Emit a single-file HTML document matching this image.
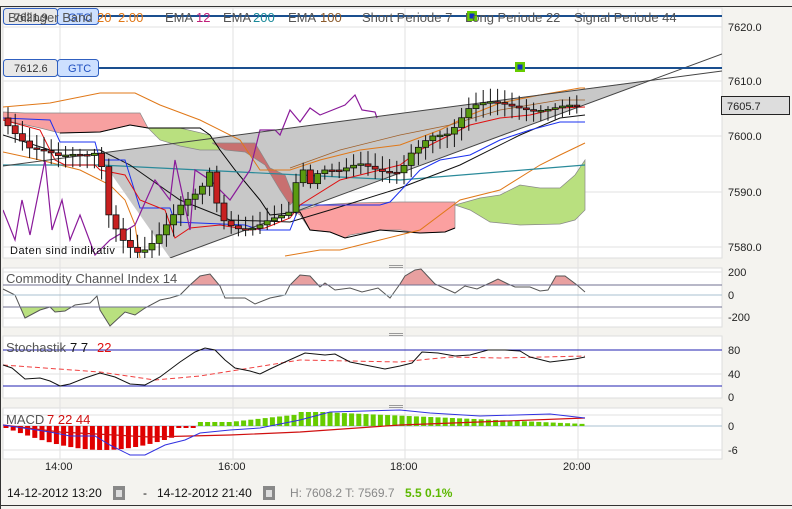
<!DOCTYPE html>
<html><head><meta charset="utf-8"><style>
html,body{margin:0;padding:0;background:#f4f3ef;}
svg{display:block;font-family:"Liberation Sans",sans-serif;}
</style></head><body>
<svg id="s" width="792" height="509" viewBox="0 0 792 509" xmlns="http://www.w3.org/2000/svg">
<rect x="0" y="0" width="792" height="509" fill="#f4f3ef"/>
<line x1="0" y1="6.5" x2="792" y2="6.5" stroke="#333"/>
<line x1="0.5" y1="6" x2="0.5" y2="509" stroke="#333"/>
<rect x="3" y="8" width="719" height="250" fill="#fff" stroke="#ddd"/>
<rect x="3" y="268" width="719" height="59" fill="#fff" stroke="#ddd"/>
<rect x="3" y="336" width="719" height="62" fill="#fff" stroke="#ddd"/>
<rect x="3" y="408" width="719" height="51" fill="#fff" stroke="#ddd"/>
<g stroke="#999" stroke-width="1">
<line x1="389" y1="265.5" x2="403" y2="265.5"/><line x1="389" y1="267.5" x2="403" y2="267.5"/>
<line x1="389" y1="333.5" x2="403" y2="333.5"/><line x1="389" y1="335.5" x2="403" y2="335.5"/>
<line x1="389" y1="405.5" x2="403" y2="405.5"/><line x1="389" y1="407.5" x2="403" y2="407.5"/>
</g>
<g stroke="#e2e2e2">
<line x1="3" y1="27" x2="722" y2="27"/><line x1="3" y1="81" x2="722" y2="81"/><line x1="3" y1="136" x2="722" y2="136"/><line x1="3" y1="192" x2="722" y2="192"/><line x1="3" y1="247" x2="722" y2="247"/>
<line x1="3" y1="272" x2="722" y2="272"/><line x1="3" y1="318" x2="722" y2="318"/>
<line x1="3" y1="374" x2="722" y2="374"/><line x1="3" y1="415" x2="722" y2="415"/><line x1="3" y1="450" x2="722" y2="450"/>
<line x1="60" y1="8" x2="60" y2="459"/><line x1="233" y1="8" x2="233" y2="459"/><line x1="405" y1="8" x2="405" y2="459"/><line x1="578" y1="8" x2="578" y2="459"/>
</g>
<defs><clipPath id="mc"><rect x="3" y="8" width="719" height="250"/></clipPath>
<clipPath id="cb"><rect x="0" y="307" width="792" height="30"/></clipPath>
<clipPath id="ca"><rect x="0" y="260" width="792" height="25"/></clipPath></defs>
<g clip-path="url(#mc)">
<polygon points="97,153.6 650,80 170,258" fill="#c8c8c8"/>
<polygon points="3,112 25,113 140,113 148,128 130,125 100,132 60,133 40,128 3,120" fill="#f7a0a0" stroke="#888" stroke-width="0.7"/>
<polygon points="148,128 180,128 210,135 220,150 200,150 180,146 160,140" fill="#b9e07f" stroke="#888" stroke-width="0.7"/>
<polygon points="212,143 255,143 270,168 285,175 295,200 290,205 280,190 265,165 245,152 225,150" fill="#c87070" stroke="#888" stroke-width="0.7"/>
<polygon points="295,212 320,205 350,203 400,202 455,202 455,228 445,232 420,233 400,230 380,230 350,235 345,238 330,232 310,230 300,215" fill="#fba0a0" stroke="#888" stroke-width="0.7"/>
<polygon points="455,205 480,198 500,195 520,185 540,188 560,188 575,175 585,160 585,210 575,220 560,224 520,225 490,222 470,210" fill="#b9e07f" stroke="#888" stroke-width="0.7"/>
<polyline points="60,133 100,132 130,125 148,128 160,128 180,128 200,128 210,135 220,150 235,170 260,200 270,215 300,212 310,230 330,232 345,238 380,230 420,233 445,232 455,228" fill="none" stroke="#000" stroke-width="1"/>
<polyline points="3,107 50,103 100,93 135,93 160,105 200,120 240,140 260,170 290,170 320,160 360,150 400,145 440,130 470,115 500,103 540,95 580,88 585,88" fill="none" stroke="#e07818" stroke-width="1"/>
<polyline points="3,152 40,160 80,170 110,185 125,200 135,225 140,258" fill="none" stroke="#e07818"/>
<polyline points="285,256 320,250 340,250 380,240 420,230 460,200 500,190 540,165 560,155 585,143" fill="none" stroke="#e07818"/>
<polyline points="290,168 340,150 400,135 450,125 500,110 560,100 585,100" fill="none" stroke="#a0602a" stroke-width="0.8"/>
<polyline points="3,165 100,165 200,170 300,175 400,180 585,165" fill="none" stroke="#2a8a9a" stroke-width="1.2"/>
<polyline points="3,135 50,150 100,150 130,165 180,200 230,220 290,222 330,210 400,188 460,165 520,135 560,118 585,115" fill="none" stroke="#111" stroke-width="1"/>
<polyline points="3,118 50,120 60,142 95,142 100,160 125,160 140,208 170,208 175,222 245,225 260,230 290,230 300,205 380,205 390,202 420,170 440,160 470,155 500,140 530,130 560,122 585,122" fill="none" stroke="#1a30f0" stroke-width="1"/>
<polyline points="3,120 40,130 55,160 65,165 95,165 100,170 125,175 140,200 165,210 175,238 190,228 220,225 250,230 265,228 290,218 300,205 340,180 380,170 400,165 420,150 440,140 470,125 500,118 530,115 560,108 585,107" fill="none" stroke="#e01010" stroke-width="1"/>
<polyline points="3,210 15,240 22,200 30,235 45,160 52,230 62,200 70,240 80,215 95,255 110,240 135,225 155,180 170,200 175,160 190,230 195,170 210,180 230,200 250,170 260,130 275,130 280,135 290,110 300,122 310,108 320,115 345,105 355,95 362,110 375,112 377,118" fill="none" stroke="#8a1a9a" stroke-width="1.2"/>
<line x1="3" y1="166" x2="722" y2="71" stroke="#444" stroke-width="1"/>
<line x1="170" y1="258" x2="722" y2="54" stroke="#444" stroke-width="1"/>
<g id="candles"></g>
</g>
<line x1="99" y1="16" x2="722" y2="16" stroke="#1a4f8f" stroke-width="2"/>
<line x1="99" y1="68" x2="722" y2="68" stroke="#1a4f8f" stroke-width="2"/>
<rect x="467" y="11" width="10" height="10" fill="#6c0"/><rect x="469.5" y="13.5" width="5" height="5" fill="#1030c0"/>
<rect x="515" y="62" width="10" height="10" fill="#6c0"/><rect x="517.5" y="64.5" width="5" height="5" fill="#1030c0"/>
<rect x="3.5" y="8.5" width="54" height="16" rx="3" fill="#e8e8e8" stroke="#3060c0"/>
<rect x="57.5" y="8.5" width="41" height="16" rx="3" fill="#cde0ff" stroke="#3060c0"/>
<text x="14" y="21" font-size="11" fill="#333">7621.9</text><text x="68" y="21" font-size="11" fill="#2050c0">GTC</text>
<rect x="3.5" y="59.5" width="54" height="17" rx="3" fill="#e8e8e8" stroke="#3060c0"/>
<rect x="57.5" y="59.5" width="41" height="17" rx="3" fill="#cde0ff" stroke="#3060c0"/>
<text x="14" y="72" font-size="11" fill="#333">7612.6</text><text x="68" y="72" font-size="11" fill="#2050c0">GTC</text>
<g font-size="13" fill="#555">
<text x="8" y="22">Bollinger Band</text><text x="97" y="22" fill="#e07818">20</text><text x="118" y="22" fill="#e07818">2.00</text>
<text x="165" y="22">EMA</text><text x="196" y="22" fill="#c0207a">12</text><text x="223" y="22">EMA</text><text x="253" y="22" fill="#1a8a9a">200</text>
<text x="288" y="22">EMA</text><text x="320" y="22" fill="#8b5a2b">100</text>
<text x="362" y="22">Short Periode  7</text><text x="465" y="22">Long Periode  22</text><text x="574" y="22">Signal Periode  44</text>
</g>
<text x="10" y="254" font-size="11" fill="#111" letter-spacing="0.5">Daten sind indikativ</text>
<g font-size="11" fill="#222">
<text x="728" y="31">7620.0</text><text x="728" y="85">7610.0</text><text x="728" y="140">7600.0</text><text x="728" y="196">7590.0</text><text x="728" y="251">7580.0</text>
<text x="728" y="276">200</text><text x="728" y="299">0</text><text x="728" y="321">-200</text>
<text x="728" y="354">80</text><text x="728" y="378">40</text><text x="728" y="401">0</text>
<text x="728" y="430">0</text><text x="728" y="454">-6</text>
</g>
<rect x="721.5" y="96.5" width="68" height="18" fill="#ddd" stroke="#222"/>
<text x="727" y="110" font-size="11" fill="#222">7605.7</text>
<g id="cci"></g>
<line x1="3" y1="285" x2="722" y2="285" stroke="#707090"/>
<line x1="3" y1="295" x2="722" y2="295" stroke="#a8c0d0"/>
<line x1="3" y1="307" x2="722" y2="307" stroke="#707090"/>
<text x="6" y="283" font-size="13" fill="#555">Commodity Channel Index  14</text>
<line x1="3" y1="350" x2="722" y2="350" stroke="#2020b0"/>
<line x1="3" y1="386" x2="722" y2="386" stroke="#2020b0"/>
<polyline points="3,365 100,372 155,380 200,376 250,368 300,360 350,361 400,362 450,357 500,358 585,356" fill="none" stroke="#f04040" stroke-dasharray="5,3"/>
<polyline points="3,365 12,368 25,379 40,378 50,381 60,386 70,384 85,378 100,373 115,377 130,384 145,385 160,377 180,362 195,352 205,348 215,350 225,360 235,368 250,371 260,374 270,369 285,362 305,353 325,355 335,354 350,362 370,366 385,369 400,366 412,363 422,352 438,353 455,356 470,355 488,350 505,350 520,351 530,357 550,362 575,359 585,357" fill="none" stroke="#111"/>
<text x="6" y="352" font-size="13" fill="#555">Stochastik</text><text x="70" y="352" font-size="13" fill="#111">7  7</text><text x="97" y="352" font-size="13" fill="#e01010">22</text>
<line x1="3" y1="426" x2="722" y2="426" stroke="#a8c0d0"/>
<g id="hist"></g>
<polyline points="3,425 60,432 150,437 230,435 300,432 400,425 585,418" fill="none" stroke="#d01010" stroke-width="1.2"/>
<polyline points="3,425 50,432 70,436 95,436 110,445 130,455 145,455 165,445 185,440 200,433 230,430 260,428 300,420 330,412 400,410 430,413 480,416 550,414 585,418" fill="none" stroke="#3030e0"/>
<text x="6" y="424" font-size="13" fill="#555">MACD</text><text x="47" y="424" font-size="13" fill="#d01010">7  22  44</text>
<g font-size="11" fill="#222"><text x="45" y="470">14:00</text><text x="218" y="470">16:00</text><text x="390" y="470">18:00</text><text x="563" y="470">20:00</text></g>
<g font-size="12" fill="#111">
<text x="7" y="497">14-12-2012 13:20</text><text x="143" y="497">-</text><text x="157" y="497">14-12-2012 21:40</text>
</g>
<rect x="113" y="486" width="12" height="14" fill="#888"/><rect x="116" y="490" width="6" height="7" fill="#ddd"/>
<rect x="263" y="486" width="12" height="14" fill="#888"/><rect x="266" y="490" width="6" height="7" fill="#ddd"/>
<text x="290" y="497" font-size="12" fill="#888">H: 7608.2  T: 7569.7</text>
<text x="405" y="497" font-size="12" fill="#5cb800" font-weight="bold">5.5  0.1%</text>
<line x1="0" y1="505.5" x2="792" y2="505.5" stroke="#333"/>
</svg>
<script>
(function(){
var NS="http://www.w3.org/2000/svg";
function el(p,t,a){var e=document.createElementNS(NS,t);for(var k in a)e.setAttribute(k,a[k]);p.appendChild(e);return e;}
var kp=[[8,118],[30,148],[60,165],[90,160],[100,150],[105,200],[110,215],[125,235],[140,245],[155,235],[165,225],[180,210],[200,200],[210,180],[220,225],[235,230],[250,225],[270,210],[290,205],[300,160],[310,185],[320,175],[340,180],[360,170],[380,170],[400,165],[410,145],[430,130],[450,135],[470,115],[490,110],[510,108],[530,105],[550,100],[560,98],[575,100],[580,105]];
function interp(x){for(var i=0;i<kp.length-1;i++){if(x<=kp[i+1][0]){var a=kp[i],b=kp[i+1];return a[1]+(b[1]-a[1])*(x-a[0])/(b[0]-a[0]);}}return kp[kp.length-1][1];}
var cg0=document.getElementById("candles");var prev=118;
for(var x=8;x<=581;x+=7.2){var c=interp(x)+Math.sin(x*1.7)*9;var o=prev;var tp=Math.min(o,c),bt=Math.max(o,c);
var hi=tp-3-Math.abs(Math.sin(x*0.9))*10,lo=bt+3+Math.abs(Math.cos(x*1.3))*10;
el(cg0,"line",{x1:x,y1:hi,x2:x,y2:lo,stroke:"#111"});
var up=c<o;el(cg0,"rect",{x:x-3,y:tp,width:6,height:Math.max(bt-tp,1.5),fill:up?"#5a9a10":"#c82020",stroke:"#111","stroke-width":0.8});prev=c;}
var cp="3,289 15,295 25,318 40,310 50,307 55,312 65,311 75,305 90,303 97,296 100,310 110,326 125,312 135,315 145,308 160,300 170,298 180,295 190,285 200,276 210,274 220,286 225,298 245,298 255,304 270,298 285,295 290,285 300,275 310,276 320,287 325,283 335,290 350,288 362,292 378,288 390,298 400,284 405,276 415,270 421,269 435,284 455,293 465,286 477,289 492,282 498,279 508,284 515,287 530,287 540,291 548,290 556,276 565,276 577,285 585,292";
var cg=document.getElementById("cci");
el(cg,"polygon",{points:cp+" 585,307 3,307",fill:"#b9e07f","clip-path":"url(#cb)"});
el(cg,"polygon",{points:cp+" 585,285 3,285",fill:"#e8a0a0","clip-path":"url(#ca)"});
el(cg,"polyline",{points:cp,fill:"none",stroke:"#555"});
var h=document.getElementById("hist");
for(var x2=6;x2<=585;x2+=7.2){var v;
if(x2<200){v=Math.sin((x2-6)/194*Math.PI)*22+2;if(x2>175)v=2;v=Math.max(v,2);el(h,"rect",{x:x2-2.5,y:426,width:5,height:v,fill:"#e00000"});}
else{v=x2<230?4:(x2<320?4+(x2-230)/90*10:14-(x2-320)/265*12);if(x2>300&&x2<330)v=14;el(h,"rect",{x:x2-2.5,y:426-v,width:5,height:v,fill:"#66cc00"});}}
})();
</script>
</body></html>
